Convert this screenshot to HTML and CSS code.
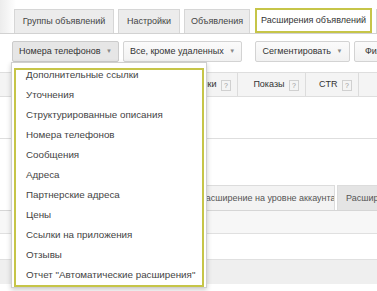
FILE: index.html
```html
<!DOCTYPE html>
<html lang="ru">
<head>
    <meta charset="UTF-8">
    <title>Расширения объявлений</title>
    <link rel="stylesheet" href="styles.css">
</head>
<body>
    <div class="tabs">
        <div class="tab tab-groups">Группы объявлений</div>
        <div class="tab tab-settings">Настройки</div>
        <div class="tab tab-ads">Объявления</div>
        <div class="tab tab-active">Расширения объявлений</div>
        <div class="tab tab-more">Ключевые слова</div>
    </div>

    <div class="toolbar">
        <div class="btn btn-pressed btn-type">Номера телефонов <span class="caret">▼</span></div>
        <div class="btn btn-status">Все, кроме удаленных <span class="caret">▼</span></div>
        <div class="btn btn-seg">Сегментировать <span class="caret">▼</span></div>
        <div class="btn btn-filter">Фильтр <span class="caret">▼</span></div>
    </div>

    <div class="grid">
        <div class="grid-head">
            <div class="col col-name"></div>
            <div class="col col-clicks">Клики <span class="help">?</span></div>
            <div class="col col-imp">Показы <span class="help">?</span></div>
            <div class="col col-ctr">CTR <span class="help">?</span></div>
            <div class="col col-rest"></div>
        </div>
        <div class="grid-row"></div>
    </div>

    <!-- первая вкладка целиком закрыта меню -->
    <div class="subtabs">
        <div class="subtab subtab-first"></div>
        <div class="subtab subtab-account">Расширение на уровне аккаунта</div>
        <div class="subtab subtab-dark">Расширения кампаний</div>
    </div>
    <div class="rows">
        <div class="row row-light"></div>
        <div class="row"></div>
        <div class="row row-total"></div>
    </div>

    <!-- выпадающее меню типа расширения -->
    <div class="menu">
        <div class="menu-frame">
            <ul class="menu-list">
                <li>Дополнительные ссылки</li>
                <li>Уточнения</li>
                <li>Структурированные описания</li>
                <li>Номера телефонов</li>
                <li>Сообщения</li>
                <li>Адреса</li>
                <li>Партнерские адреса</li>
                <li>Цены</li>
                <li>Ссылки на приложения</li>
                <li>Отзывы</li>
                <li>Отчет "Автоматические расширения"</li>
            </ul>
        </div>
    </div>
</body>
</html>
```

FILE: styles.css
```css
body {
    margin: 0;
    font-family: "Liberation Sans", Arial, sans-serif;
    font-size: 9px;
    color: #444;
    background-color: #fff;
    overflow: hidden;
}
.tabs {
    display: flex;
    gap: 4px;
    height: 24px;
    padding: 9px 0 0 14px;
    border-bottom: 1px solid #d2d2d2;
    background: linear-gradient(to right, #ececec, #fff 16px);
    white-space: nowrap;
}
.tab {
    box-sizing: border-box;
    flex-shrink: 0;
    height: 24px;
    line-height: 22px;
    text-align: center;
    border: 1px solid #d6d6d6;
    border-bottom: none;
    background-color: #ececec;
    color: #444;
    overflow: hidden;
}
.tab-groups {
    width: 100px;
}
.tab-settings {
    width: 62px;
}
.tab-ads {
    width: 66px;
}
.tab-active {
    width: 117px;
    height: 25px;
    margin-top: -1px;
    margin-left: 1px;
    line-height: 21px;
    border: 2px solid #c6c548;
    background-color: #fff;
    color: #333;
}
.tab-more {
    width: 90px;
    text-align: left;
    padding-left: 8px;
}
.toolbar {
    display: flex;
    gap: 4px;
    margin-top: 7px;
    padding-left: 12px;
    white-space: nowrap;
}
.btn {
    box-sizing: border-box;
    flex-shrink: 0;
    height: 21px;
    line-height: 19px;
    text-align: center;
    border: 1px solid #d3d3d3;
    border-radius: 2px;
    background: linear-gradient(#fbfbfb, #f1f1f1);
    color: #333;
    overflow: hidden;
}
.btn-pressed {
    background: #e6e6e6;
    border-color: #cbcbcb;
}
.btn-type {
    width: 107px;
}
.btn-status {
    width: 119px;
}
.btn-seg {
    width: 95px;
    margin-left: 9px;
}
.btn-filter {
    width: 80px;
    text-align: left;
    padding-left: 10px;
}
.caret {
    font-size: 6px;
    color: #888;
    vertical-align: 1px;
    margin-left: 3px;
}
.grid {
    margin-top: 10px;
}
.grid-head {
    display: flex;
    height: 23px;
    border-top: 1px solid #dedede;
    border-bottom: 1px solid #dedede;
    background-color: #f4f4f4;
    color: #333;
}
.col {
    box-sizing: border-box;
    line-height: 22px;
    text-align: right;
    padding-right: 6px;
    border-right: 1px solid #dcdcdc;
}
.col-name {
    width: 150px;
}
.col-clicks {
    width: 88px;
}
.col-imp {
    width: 68px;
}
.col-ctr {
    width: 53px;
}
.col-rest {
    flex: 1;
    border-right: none;
}
.help {
    display: inline-block;
    width: 8px;
    height: 9px;
    line-height: 9px;
    margin-left: 2px;
    border: 1px solid #d0d0d0;
    font-size: 7px;
    text-align: center;
    color: #999;
    vertical-align: -1px;
}
.grid-row {
    height: 41px;
    border-bottom: 1px solid #dedede;
}
.subtabs {
    display: flex;
    gap: 2px;
    margin-top: 46px;
    padding-left: 11px;
    white-space: nowrap;
}
.subtab {
    box-sizing: border-box;
    flex-shrink: 0;
    height: 25px;
    padding: 0 8px;
    line-height: 24px;
    border: 1px solid #dcdcdc;
    border-bottom: none;
    background-color: #f3f3f3;
    color: #555;
    overflow: hidden;
}
.subtab-first {
    width: 178px;
    border-left-color: #8b6b5e;
}
.subtab-account {
    width: 144px;
    text-align: right;
}
.subtab-dark {
    width: 120px;
    background-color: #e4e4e4;
}
.rows {
    border-top: 1px solid #d6d6d6;
}
.row {
    height: 25px;
    border-bottom: 1px solid #e0e0e0;
}
.row-light {
    height: 22px;
    background-color: #f7f7f7;
}
.row-total {
    height: 24px;
    background-color: #efefef;
    border-bottom: none;
}
.menu {
    position: absolute;
    left: 11px;
    top: 62px;
    width: 196px;
    height: 226px;
    box-sizing: border-box;
    padding: 5px 2px 0 2px;
    border: 1px solid #cfcfcf;
    background-color: #fff;
    box-shadow: 0 2px 5px rgba(0, 0, 0, 0.2);
}
.menu-frame {
    height: 219px;
    box-sizing: border-box;
    border: 2px solid #c6c548;
    overflow: hidden;
}
.menu-list {
    list-style: none;
    margin: -5px 0 0 0;
    padding: 0;
    font-size: 9.8px;
}
.menu-list li {
    height: 20px;
    line-height: 20px;
    padding-left: 10px;
    color: #444;
    white-space: nowrap;
}
```
